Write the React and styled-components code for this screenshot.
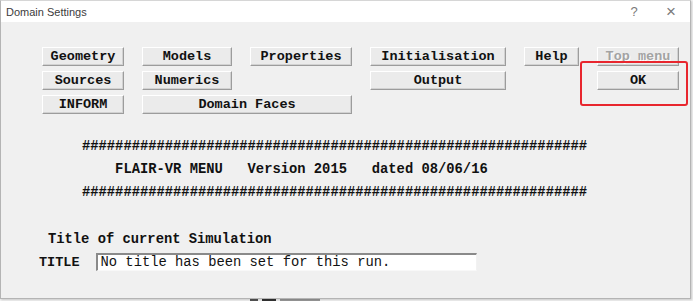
import React from "react";
import styled, { createGlobalStyle } from "styled-components";

const Global = createGlobalStyle`
  html, body { margin: 0; padding: 0; background: #f4f4f4; overflow: hidden; }
`;

const MONO = `"Liberation Mono", "Courier New", monospace`;

const Root = styled.div`
  width: 693px;
  height: 301px;
  display: flex;
  flex-direction: column;
  background: #f4f4f4;
`;

const Window = styled.div`
  position: relative;
  width: 689px;
  height: 297px;
  display: flex;
  flex-direction: column;
  border: 1px solid #b4b4b4;
  border-top-color: #d6d6d6;
  box-shadow: 1px 1px 2px rgba(0, 0, 0, 0.18);
  background: #f0f0f0;
`;

const TitleBar = styled.div`
  height: 21px;
  display: flex;
  align-items: center;
  justify-content: space-between;
  background: #ffffff;
  padding-left: 5px;
`;

const TitleText = styled.span`
  font-family: "Liberation Sans", Arial, sans-serif;
  font-size: 11px;
  color: #3c3c3c;
`;

const Controls = styled.div`
  display: flex;
  align-items: center;
  height: 100%;
`;

const ControlGlyph = styled.span`
  width: ${(p) => p.$w}px;
  text-align: center;
  font-family: "Liberation Sans", Arial, sans-serif;
  font-size: ${(p) => p.$size}px;
  color: #7a7a7a;
  font-weight: 300;
`;

const Client = styled.div`
  flex: 1;
  display: flex;
  flex-direction: column;
  padding-top: 25px;
`;

const ButtonGrid = styled.div`
  display: grid;
  grid-template-columns: 82px 90px 102px 136px 55px 82px;
  grid-auto-rows: 19px;
  column-gap: 18px;
  row-gap: 5px;
  margin-left: 41px;
`;

const Btn = styled.button`
  grid-column: ${(p) => p.$col} / span ${(p) => p.$span || 1};
  grid-row: ${(p) => p.$row};
  margin: 0;
  padding: 0;
  box-sizing: border-box;
  height: 19px;
  background: #ebebeb;
  border: 1px solid;
  border-color: #ffffff #9c9c9c #9c9c9c #ffffff;
  box-shadow: inset -1px -1px 0 #d2d2d2;
  font-family: ${MONO};
  font-weight: bold;
  font-size: 13.5px;
  line-height: 16px;
  color: ${(p) => (p.disabled ? "#a3a3a3" : "#111")};
  text-shadow: ${(p) => (p.disabled ? "1px 1px 0 #ffffff" : "none")};
  text-align: center;
  cursor: default;
`;

const Banner = styled.div`
  margin-top: 21px;
  margin-left: 81px;
  font-family: ${MONO};
  font-weight: bold;
  font-size: 13.8px;
  line-height: 23px;
  color: #111;
  white-space: pre;
`;

const Heading = styled.div`
  margin-top: 24px;
  margin-left: 47px;
  font-family: ${MONO};
  font-weight: bold;
  font-size: 13.8px;
  line-height: 23px;
  color: #111;
`;

const TitleRow = styled.div`
  margin-top: 2px;
  margin-left: 38px;
  display: flex;
  align-items: center;
  gap: 16px;
`;

const Label = styled.span`
  font-family: ${MONO};
  font-weight: bold;
  font-size: 13.5px;
  color: #111;
`;

const Field = styled.div`
  box-sizing: border-box;
  width: 381px;
  height: 18px;
  background: #ffffff;
  border: 2px solid;
  border-color: #8a8a8a #f2f2f2 #f8f8f8 #8a8a8a;
  border-right-width: 1px;
  border-bottom-width: 1px;
  padding-left: 3px;
  font-family: ${MONO};
  font-size: 13.8px;
  line-height: 15px;
  color: #111;
  white-space: pre;
`;

const Highlight = styled.div`
  position: absolute;
  left: 579px;
  top: 60px;
  width: 108px;
  height: 45px;
  box-sizing: border-box;
  border: 2px solid #e8262e;
  border-radius: 3px;
  pointer-events: none;
`;

const Behind = styled.div`
  flex: 1;
  display: flex;
  gap: 4px;
  padding-left: 250px;
`;

const BehindBit = styled.span`
  width: ${(p) => p.$w}px;
  background: ${(p) => p.$c};
`;

const hashes = "#".repeat(61);

export default function App() {
  return (
    <>
      <Global />
      <Root>
        <Window>
          <TitleBar>
            <TitleText>Domain Settings</TitleText>
            <Controls>
              <ControlGlyph $w={36} $size={13}>?</ControlGlyph>
              <ControlGlyph $w={38} $size={17}>×</ControlGlyph>
            </Controls>
          </TitleBar>
          <Client>
            <ButtonGrid>
              <Btn $col={1} $row={1}>Geometry</Btn>
              <Btn $col={2} $row={1}>Models</Btn>
              <Btn $col={3} $row={1}>Properties</Btn>
              <Btn $col={4} $row={1}>Initialisation</Btn>
              <Btn $col={5} $row={1}>Help</Btn>
              <Btn $col={6} $row={1} disabled>Top menu</Btn>
              <Btn $col={1} $row={2}>Sources</Btn>
              <Btn $col={2} $row={2}>Numerics</Btn>
              <Btn $col={4} $row={2}>Output</Btn>
              <Btn $col={6} $row={2}>OK</Btn>
              <Btn $col={1} $row={3}>INFORM</Btn>
              <Btn $col={2} $span={2} $row={3}>Domain Faces</Btn>
            </ButtonGrid>
            <Banner>
              {hashes}
              {"\n"}
              {"    FLAIR-VR MENU   Version 2015   dated 08/06/16"}
              {"\n"}
              {hashes}
            </Banner>
            <Heading>Title of current Simulation</Heading>
            <TitleRow>
              <Label>TITLE</Label>
              <Field>No title has been set for this run.</Field>
            </TitleRow>
          </Client>
          <Highlight />
        </Window>
        <Behind>
          <BehindBit $w={8} $c="#555" />
          <BehindBit $w={14} $c="#333" />
          <BehindBit $w={40} $c="#9a9a9a" />
        </Behind>
      </Root>
    </>
  );
}
